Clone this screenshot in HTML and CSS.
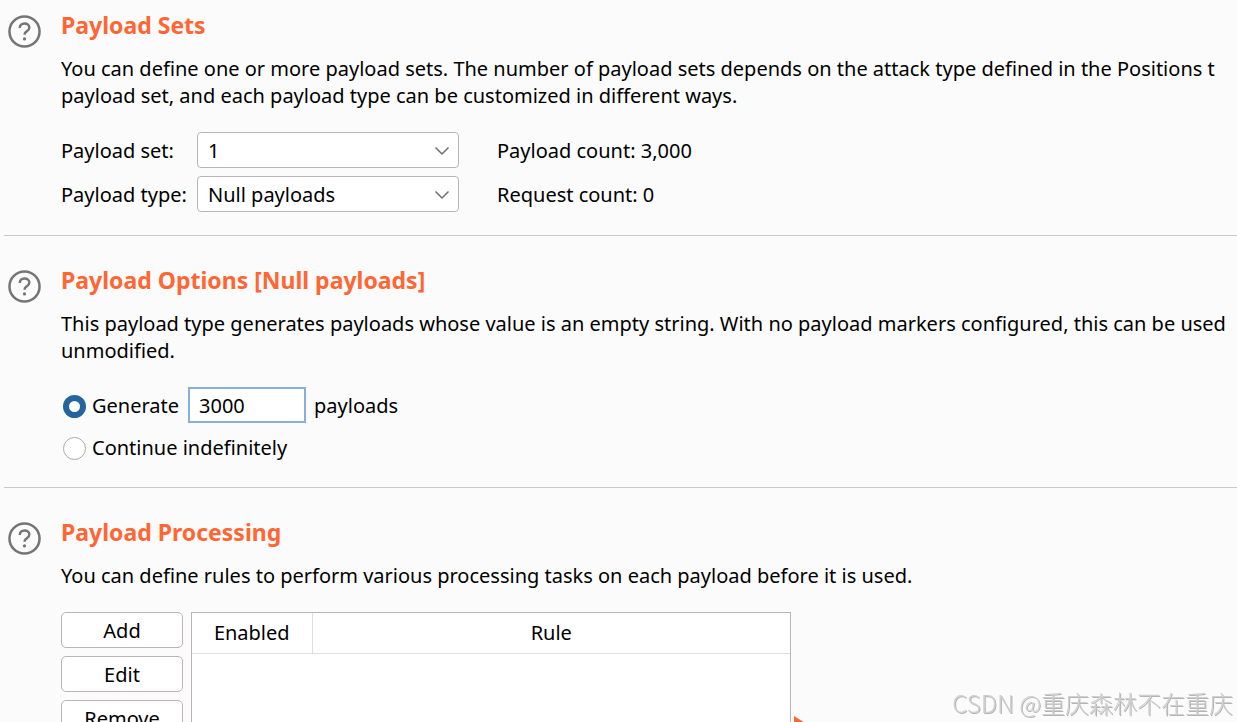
FILE: index.html
```
<!DOCTYPE html>
<html lang="en">
<head>
<meta charset="utf-8">
<title>Payloads</title>
<link rel="stylesheet" href="styles.css">
</head>
<body>
<svg class="defs" aria-hidden="true">
  <symbol id="help" viewBox="0 0 34 34">
    <circle cx="17" cy="17" r="15.500" fill="none" stroke="#757575" stroke-width="2.600"/>
    <path d="M12.100 13.400c0-2.900 2.100-4.700 4.900-4.700 2.900 0 5 1.800 5 4.300 0 2-1.200 3-2.700 3.900-1.600.9-2.300 1.700-2.300 3.400" fill="none" stroke="#757575" stroke-width="2.500"/>
    <circle cx="17" cy="24.700" r="1.700" fill="#757575"/>
  </symbol>
  <symbol id="chevron" viewBox="0 0 16 10">
    <path d="M1.500 1.500 8 8l6.500-6.500" fill="none" stroke="#6e6e6e" stroke-width="1.500"/>
  </symbol>
</svg>
<main class="page">
  <section class="section">
    <button class="help" type="button" aria-label="Help"><svg><use href="#help"/></svg></button>
    <div class="content">
      <h2 class="title">Payload Sets</h2>
      <p class="description">You can define one or more payload sets. The number of payload sets depends on the attack type defined in the Positions t<br>payload set, and each payload type can be customized in different ways.</p>
      <div class="fields">
        <label for="set">Payload set:</label>
        <span class="combo"><select id="set"><option>1</option></select><svg class="chevron"><use href="#chevron"/></svg></span>
        <span class="count">Payload count: 3,000</span>
        <label for="type">Payload type:</label>
        <span class="combo"><select id="type"><option>Null payloads</option></select><svg class="chevron"><use href="#chevron"/></svg></span>
        <span class="count">Request count: 0</span>
      </div>
    </div>
  </section>
  <section class="section">
    <button class="help" type="button" aria-label="Help"><svg><use href="#help"/></svg></button>
    <div class="content">
      <h2 class="title">Payload Options [Null payloads]</h2>
      <p class="description">This payload type generates payloads whose value is an empty string. With no payload markers configured, this can be used<br>unmodified.</p>
      <div class="choices">
        <div class="choice">
          <input class="radio" type="radio" name="mode" id="generate" checked>
          <label class="before-input" for="generate">Generate</label>
          <input class="number" type="text" id="amount" value="3000">
          <label class="after-input" for="amount">payloads</label>
        </div>
        <div class="choice">
          <input class="radio" type="radio" name="mode" id="continue">
          <label for="continue">Continue indefinitely</label>
        </div>
      </div>
    </div>
  </section>
  <section class="section">
    <button class="help" type="button" aria-label="Help"><svg><use href="#help"/></svg></button>
    <div class="content">
      <h2 class="title">Payload Processing</h2>
      <p class="description">You can define rules to perform various processing tasks on each payload before it is used.</p>
      <div class="rules">
        <div class="actions">
          <button class="action" type="button">Add</button>
          <button class="action" type="button">Edit</button>
          <button class="action" type="button">Remove</button>
        </div>
        <div class="panel">
          <table class="table">
            <thead><tr><th class="enabled">Enabled</th><th>Rule</th></tr></thead>
            <tbody></tbody>
          </table>
        </div>
        <svg class="marker" viewBox="0 0 16 20" aria-hidden="true"><path d="M0 0 16 10 0 20z" fill="#ff6633"/></svg>
      </div>
    </div>
  </section>
</main>
<div class="watermark">CSDN @重庆森林不在重庆</div>
</body>
</html>
```
FILE: styles.css
```
* { box-sizing: border-box; }

body {
  margin: 0;
  background: #fbfbfb;
  color: #000;
  font: 20px/27px "Noto Sans", "Noto Sans CJK SC", sans-serif;
}

input, select, button { font: inherit; color: inherit; }

.defs { position: absolute; width: 0; height: 0; }

.page {
  height: 100vh;
  padding-left: 4px;
  overflow: hidden;
}

.section {
  display: grid;
  grid-template-columns: 57px minmax(0, 1fr);
  padding: 30px 0 23px;
}
.section + .section { border-top: 1px solid #c8c8c8; }
.section:first-child { padding-top: 11px; }

.help {
  width: 33px;
  height: 33px;
  margin: 4px 0 0 4px;
  padding: 0;
  border: 0;
  background: none;
}
.help svg { display: block; width: 33px; height: 33px; }

.title {
  margin: 0 0 16px;
  color: #ff6633;
  font-size: 23px;
  font-weight: 700;
  line-height: 28px;
}

.description {
  margin: 0 0 23px;
  white-space: nowrap;
}

.fields {
  display: grid;
  grid-template-columns: 136px 262px 1fr;
  row-gap: 8px;
  align-items: center;
  white-space: nowrap;
}
.count { padding-left: 38px; }

.combo { position: relative; display: grid; }
.combo select {
  appearance: none;
  height: 36px;
  padding: 0 10px;
  border: 1px solid #bab4b6;
  border-radius: 4px;
  background: #fff;
}
.chevron {
  position: absolute;
  top: 14px;
  right: 9px;
  width: 16px;
  height: 10px;
  pointer-events: none;
}

.choices { display: grid; row-gap: 8px; }
.choice {
  display: flex;
  align-items: center;
  min-height: 33px;
}
.radio {
  appearance: none;
  width: 23px;
  height: 23px;
  margin: 2px 6px 0 2px;
  border: 1px solid #aaa;
  border-radius: 50%;
  background: #fff;
}
.radio:checked { border: 6px solid #2465a0; }
.before-input { min-width: 96px; }
.number {
  width: 118px;
  height: 36px;
  padding: 0 9px;
  border: 2px solid #87afda;
  background: #fff;
}
.after-input { padding-left: 8px; }

.rules {
  display: grid;
  grid-template-columns: 122px minmax(0, 600px) 16px;
  column-gap: 8px;
}
.actions { display: grid; align-content: start; row-gap: 8px; }
.action {
  height: 36px;
  padding: 0;
  border: 1px solid #bab4b6;
  border-radius: 5px;
  background: #fff;
}
.panel {
  height: 228px;
  border: 1px solid #bab4b6;
  background: #fff;
}
.table {
  width: 100%;
  border-collapse: collapse;
  table-layout: fixed;
}
.table th {
  height: 40px;
  padding: 0;
  border-bottom: 1px solid #dedede;
  font-weight: 400;
}
.table .enabled { width: 120px; border-right: 1px solid #dedede; }

.marker { width: 16px; height: 20px; margin: 104px 0 0 -5px; }

.watermark {
  position: fixed;
  right: 4px;
  bottom: 2px;
  color: #d0d0d0;
  font: 300 24px/34px "Noto Sans CJK SC", sans-serif;
  text-shadow: 1px 1px 0 #b4b4b4;
}
```
